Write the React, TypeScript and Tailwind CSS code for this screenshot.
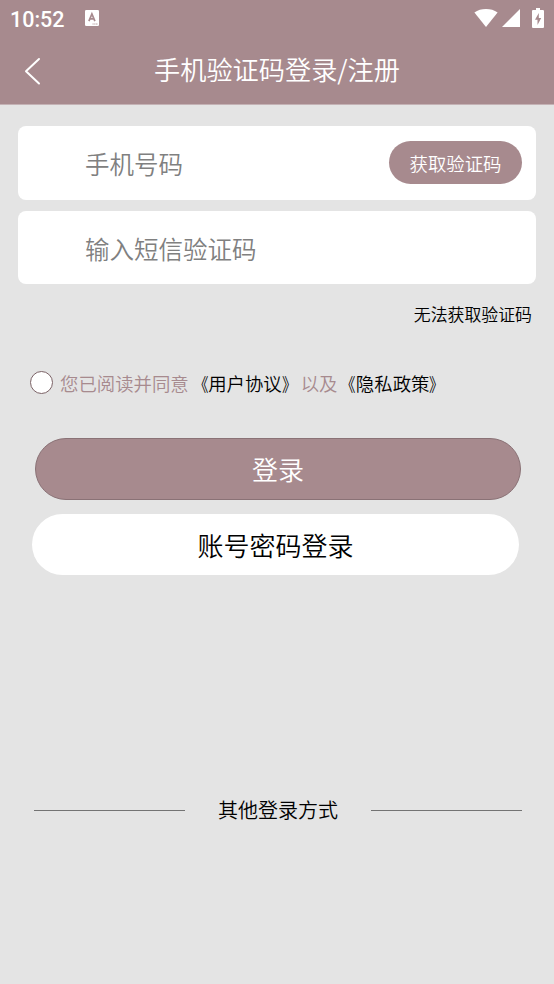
import { useState } from 'react';

const StatusBar = () => (
  <div className="flex h-[37px] items-center px-[10px] text-white">
    <span className="w-[75px] pt-[2px] font-['Roboto',sans-serif] text-[21.5px] font-medium leading-none">10:52</span>
    <svg className="mb-px h-[16px] w-[14px]" viewBox="0 0 14 16">
      <rect width="14" height="16" rx="1.3" fill="#fff" />
      <path d="M3.9 11.2 6.9 4 9.9 11.2M5 8.8h3.8" fill="none" stroke="#a78a8e" strokeWidth="1.7" />
      <path d="M7.5 14h5.5" stroke="#a78a8e" strokeWidth="0.8" strokeDasharray="1.2 0.5" />
    </svg>
    <div className="mb-[2px] ml-auto flex items-center">
      <svg className="h-[18px] w-[24px]" viewBox="0 0 24 18">
        <path d="M0.4 3.6C3.8 1.1 7.6 0 12 0s8.2 1.1 11.6 3.6L12 18z" fill="#fff" />
      </svg>
      <svg className="ml-[4px] h-[18px] w-[18px]" viewBox="0 0 18 18">
        <path d="M18 0v18H0z" fill="#fff" />
      </svg>
      <svg className="ml-[12px] h-[20px] w-[12px]" viewBox="0 0 12 20">
        <path d="M4 0h4v2h2.9q1.1 0 1.1 1.1v15.8q0 1.1-1.1 1.1H1.1Q0 20 0 18.9V3.1Q0 2 1.1 2H4z" fill="#fff" />
        <path d="M6.8 5 3 11.8h2.5V17l3.7-7H6.8z" fill="#a78a8e" />
      </svg>
    </div>
  </div>
);

// The title marks are condensed towards the text they enclose
const DocLink = ({ title }: { title: string }) => (
  <a className="cursor-pointer">
    <span className="inline-block origin-right scale-x-80">《</span>
    {title}
    <span className="inline-block origin-left scale-x-80">》</span>
  </a>
);

const App = () => {
  const [phone, setPhone] = useState('');
  const [code, setCode] = useState('');
  const [agreed, setAgreed] = useState(false);

  return (
    <div className="flex h-[984px] w-[554px] flex-col overflow-hidden bg-[#e4e4e4] font-['Noto_Sans_CJK_SC',sans-serif] font-[350] text-black">
      <header className="h-[105px] shrink-0 border-b border-[#c4b2b5] bg-[#a78a8e] text-white">
        <StatusBar />
        <div className="grid h-[66px] grid-cols-[60px_1fr_60px] items-center">
          <button className="pl-[24px] pt-[2px]" aria-label="返回">
            <svg className="h-[28px] w-[18px]" viewBox="0 0 18 28">
              <path d="M15 2 2 14.3 15 26.5" fill="none" stroke="#fff" strokeWidth="2" strokeLinecap="round" strokeLinejoin="round" />
            </svg>
          </button>
          <h1 className="pb-[2px] text-center text-[26.2px] font-[350] leading-[34px]">手机验证码登录/注册</h1>
        </div>
      </header>

      <main className="flex flex-col">
        <div className="mx-[18px] mt-[21px] flex h-[74px] items-center rounded-lg bg-white pl-[67px] pr-[14px]">
          <input
            className="min-w-0 flex-1 pt-[2px] text-[24.5px] outline-none placeholder:text-[#808080]"
            placeholder="手机号码"
            value={phone}
            onChange={(e) => setPhone(e.target.value)}
          />
          <button className="mb-px h-[43px] w-[133px] rounded-full bg-[#a78a8e] pt-[2px] text-[18.4px] text-white">
            获取验证码
          </button>
        </div>

        <div className="mx-[18px] mt-[11px] flex h-[73px] items-center rounded-lg bg-white pl-[67px] pr-[14px]">
          <input
            className="min-w-0 flex-1 pt-[3px] text-[24.5px] outline-none placeholder:text-[#808080]"
            placeholder="输入短信验证码"
            value={code}
            onChange={(e) => setCode(e.target.value)}
          />
        </div>

        <button className="mr-[22px] mt-[18px] self-end text-[16.9px] leading-6">无法获取验证码</button>

        <div className="mt-[43px] flex h-[28px] items-center pl-[30px] text-[18.4px] leading-7">
          <button
            className="mb-px mr-[7px] h-[23px] w-[23px] shrink-0 rounded-full border border-[#7b6266] bg-white p-1"
            onClick={() => setAgreed(!agreed)}
            aria-label="同意协议"
          >
            {agreed && <span className="block h-full w-full rounded-full bg-[#a78a8e]" />}
          </button>
          <span className="mr-px text-[#a78a8e]">您已阅读并同意</span>
          <DocLink title="用户协议" />
          <span className="ml-[0.5px] text-[#a78a8e]">以及</span>
          <DocLink title="隐私政策" />
        </div>

        <button className="ml-[35px] mt-[41px] h-[62px] w-[486px] rounded-full border border-[#8a7276] bg-[#a78a8e] pb-[2px] text-[26px] text-white">
          登录
        </button>
        <button className="ml-[32px] mt-[14px] h-[61px] w-[487px] rounded-full bg-white text-[26px]">账号密码登录</button>

        <div className="ml-[34px] mr-[32px] mt-[220px] flex h-[30px] items-center gap-[33px]">
          <div className="h-px flex-1 bg-[#737373]" />
          <span className="text-[20px] leading-[30px]">其他登录方式</span>
          <div className="h-px flex-1 bg-[#737373]" />
        </div>
      </main>
    </div>
  );
};

export default App;
